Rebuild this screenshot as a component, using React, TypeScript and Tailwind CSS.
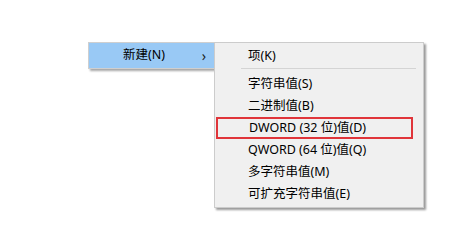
import React from "react";

const font = { fontFamily: '"Noto Sans", "Noto Sans CJK SC", sans-serif' };

function Row({ label }: { label: string }) {
  return (
    <div className="h-[22px] flex items-center pl-[33px] text-[12.5px] text-black leading-none">
      {label}
    </div>
  );
}

export default function App() {
  return (
    <div className="w-[449px] h-[249px] bg-white overflow-hidden" style={font}>
      <div className="flex items-start pt-[42px] pl-[88px]">
        <div className="w-[126px] h-[27px] border border-[#cfcfcf] border-r-0 bg-[#f0f0f0] shadow-[2px_2px_2px_rgba(0,0,0,0.35)]">
          <div className="h-[25px] bg-[#99c9f5] flex items-center pl-[34px] pr-[8px] text-[12.5px] text-black leading-none">
            <span className="flex-1">新建(N)</span>
            <span className="text-[14px] text-[#222]">›</span>
          </div>
        </div>
        <div className="w-[210px] h-[166px] border border-[#cccccc] bg-[#f0f0f0] py-[2px] shadow-[2px_2px_2px_rgba(0,0,0,0.4)]">
          <Row label="项(K)" />
          <div className="h-[6px] pt-[1px] pl-[26px] pr-[7px]">
            <div className="h-px w-full bg-[#d4d4d4]" />
          </div>
          <Row label="字符串值(S)" />
          <Row label="二进制值(B)" />
          <div className="h-[22px] ml-px mr-[10px] border-2 border-[#e0353a] flex items-center pl-[31px] text-[12.5px] text-black leading-none">
            DWORD (32 位)值(D)
          </div>
          <Row label="QWORD (64 位)值(Q)" />
          <Row label="多字符串值(M)" />
          <Row label="可扩充字符串值(E)" />
        </div>
      </div>
    </div>
  );
}
